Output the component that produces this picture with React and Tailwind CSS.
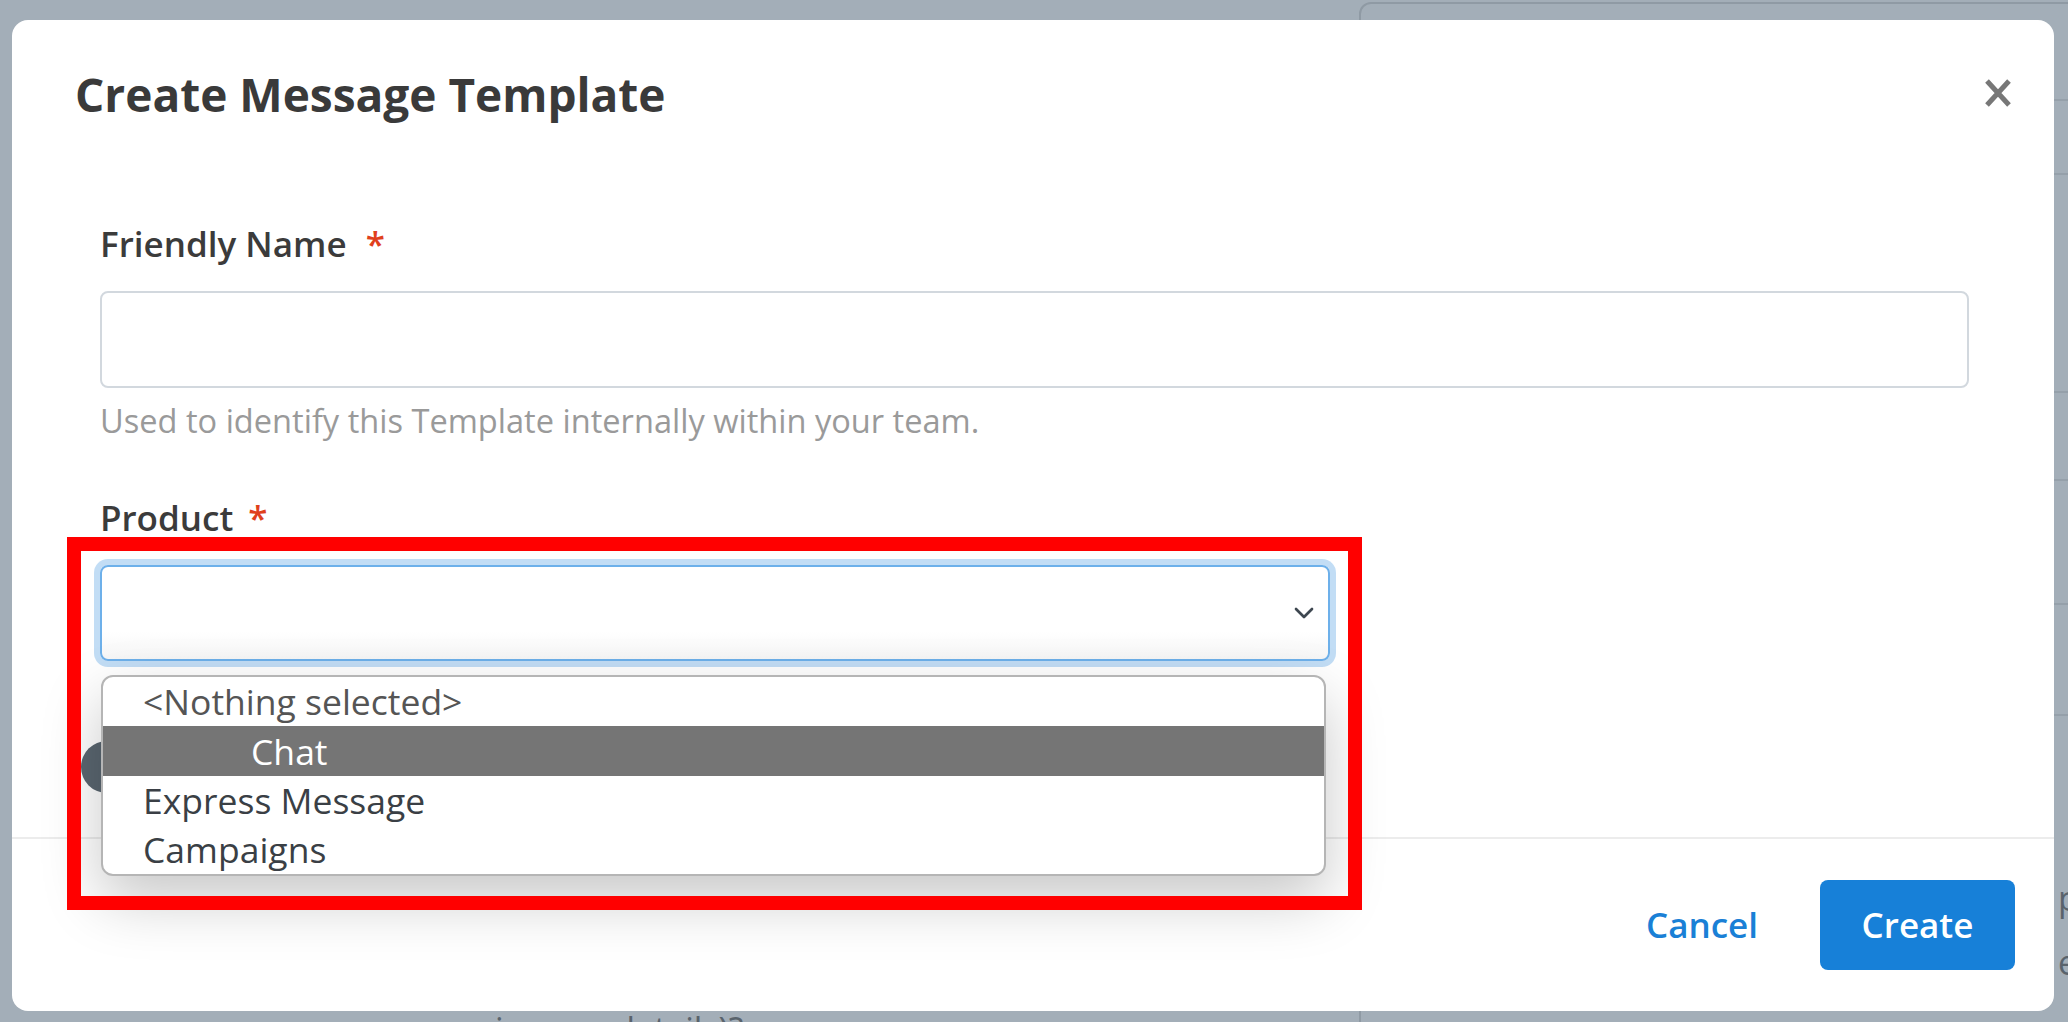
import React from 'react'
import { ChevronDown } from 'lucide-react'

const options = ['<Nothing selected>', 'Chat', 'Express Message', 'Campaigns']

function CloseIcon() {
  return (
    <svg width="28" height="30" viewBox="0 0 28 30" fill="none">
      <path d="M3 3 L25 27 M25 3 L3 27" stroke="#777" strokeWidth="5" strokeLinecap="butt" />
    </svg>
  )
}

export default function App() {
  return (
    <div className="relative w-[2068px] h-[1022px] overflow-hidden bg-[#a3aeb8] font-['Open_Sans',sans-serif]">
      {/* page behind the modal */}
      <div className="absolute left-[1359px] top-[2px] w-[760px] h-[1100px] rounded-tl-[12px] border-2 border-[#8f9aa4] flex flex-col">
        <div className="h-[97px] border-b-2 border-[#95a0aa]" />
        <div className="h-[74px] border-b-2 border-[#95a0aa]" />
        <div className="h-[218px] border-b-2 border-[#95a0aa]" />
        <div className="h-[88px] border-b-2 border-[#95a0aa]" />
        <div className="h-[124px] border-b-2 border-[#95a0aa]" />
        <div className="h-[111px] border-b-2 border-[#95a0aa]" />
        <div className="pl-[697px] pt-[150px] text-[34px] leading-[64px] text-[#59636c]">
          <div>p</div>
          <div>e</div>
        </div>
      </div>
      <div className="absolute left-[495px] top-[1004px] text-[34px] text-[#59636c] whitespace-nowrap">
        in your details)?
      </div>

      {/* modal */}
      <div className="absolute left-[12px] top-[20px] w-[2042px] h-[991px] rounded-[16px] bg-white flex flex-col">
        <div className="relative pl-[63px] pt-[47px]">
          <h2 className="text-[46px] leading-[1.2] font-bold text-[#3a3a3a]">Create Message Template</h2>
          <button className="absolute right-[42px] top-[58px]">
            <CloseIcon />
          </button>
        </div>

        <div className="relative flex-1 px-[88px] pt-[101px]">
          <label className="block text-[35px] leading-[1.2] font-semibold text-[#3b3b3b]">
            Friendly Name <span className="ml-[10px] text-[#e0401c]">*</span>
          </label>
          <div className="mt-[26px] h-[97px] w-[1869px] rounded-[8px] border-2 border-[#d2d8de] bg-white" />
          <p className="mt-[13px] text-[32.6px] leading-[1.2] text-[#9a9a9a]">
            Used to identify this Template internally within your team.
          </p>

          <label className="mt-[57px] block text-[35px] leading-[1.2] font-semibold text-[#3b3b3b]">
            Product <span className="ml-[6px] text-[#e0401c]">*</span>
          </label>
          <div className="mt-[26px] flex h-[96px] w-[1230px] items-center justify-end rounded-[8px] border-2 border-[#6db0ea] bg-gradient-to-b from-white from-70% to-[#f6f6f6] pr-[8px] shadow-[0_0_0_6px_rgba(120,180,232,0.45)]">
            <ChevronDown className="h-[32px] w-[32px] text-[#3e4750]" strokeWidth={2} />
          </div>

          {/* toggle knob partly hidden by the open list */}
          <div className="absolute left-[69px] top-[619px] h-[52px] w-[80px] rounded-full bg-[#5a6670]" />
        </div>

        <div className="flex h-[174px] items-center justify-end gap-[62px] border-t-2 border-[#ececec] pr-[39px]">
          <button className="text-[35px] font-semibold text-[#1a80d6]">Cancel</button>
          <button className="h-[90px] w-[195px] rounded-[8px] bg-[#1780d8] text-[35px] font-semibold text-white">
            Create
          </button>
        </div>

        {/* open select list */}
        <ul className="absolute left-[89px] top-[655px] w-[1225px] overflow-hidden rounded-[12px] border-2 border-[#b5b5b5] bg-white shadow-[0_24px_60px_rgba(0,0,0,0.22)]">
          {options.map((o, i) => (
            <li
              key={o}
              className={
                i === 1
                  ? 'h-[50px] bg-[#757575] pl-[148px] text-[35.5px] leading-[50px] text-white'
                  : 'h-[49px] pl-[40px] text-[35.5px] leading-[49px] ' + (i === 0 ? 'text-[#555]' : 'text-[#3a3f45]')
              }
            >
              {o}
            </li>
          ))}
        </ul>

        {/* annotation box */}
        <div className="absolute left-[55px] top-[517px] h-[373px] w-[1295px] border-[14px] border-[#ff0000]" />
      </div>
    </div>
  )
}
